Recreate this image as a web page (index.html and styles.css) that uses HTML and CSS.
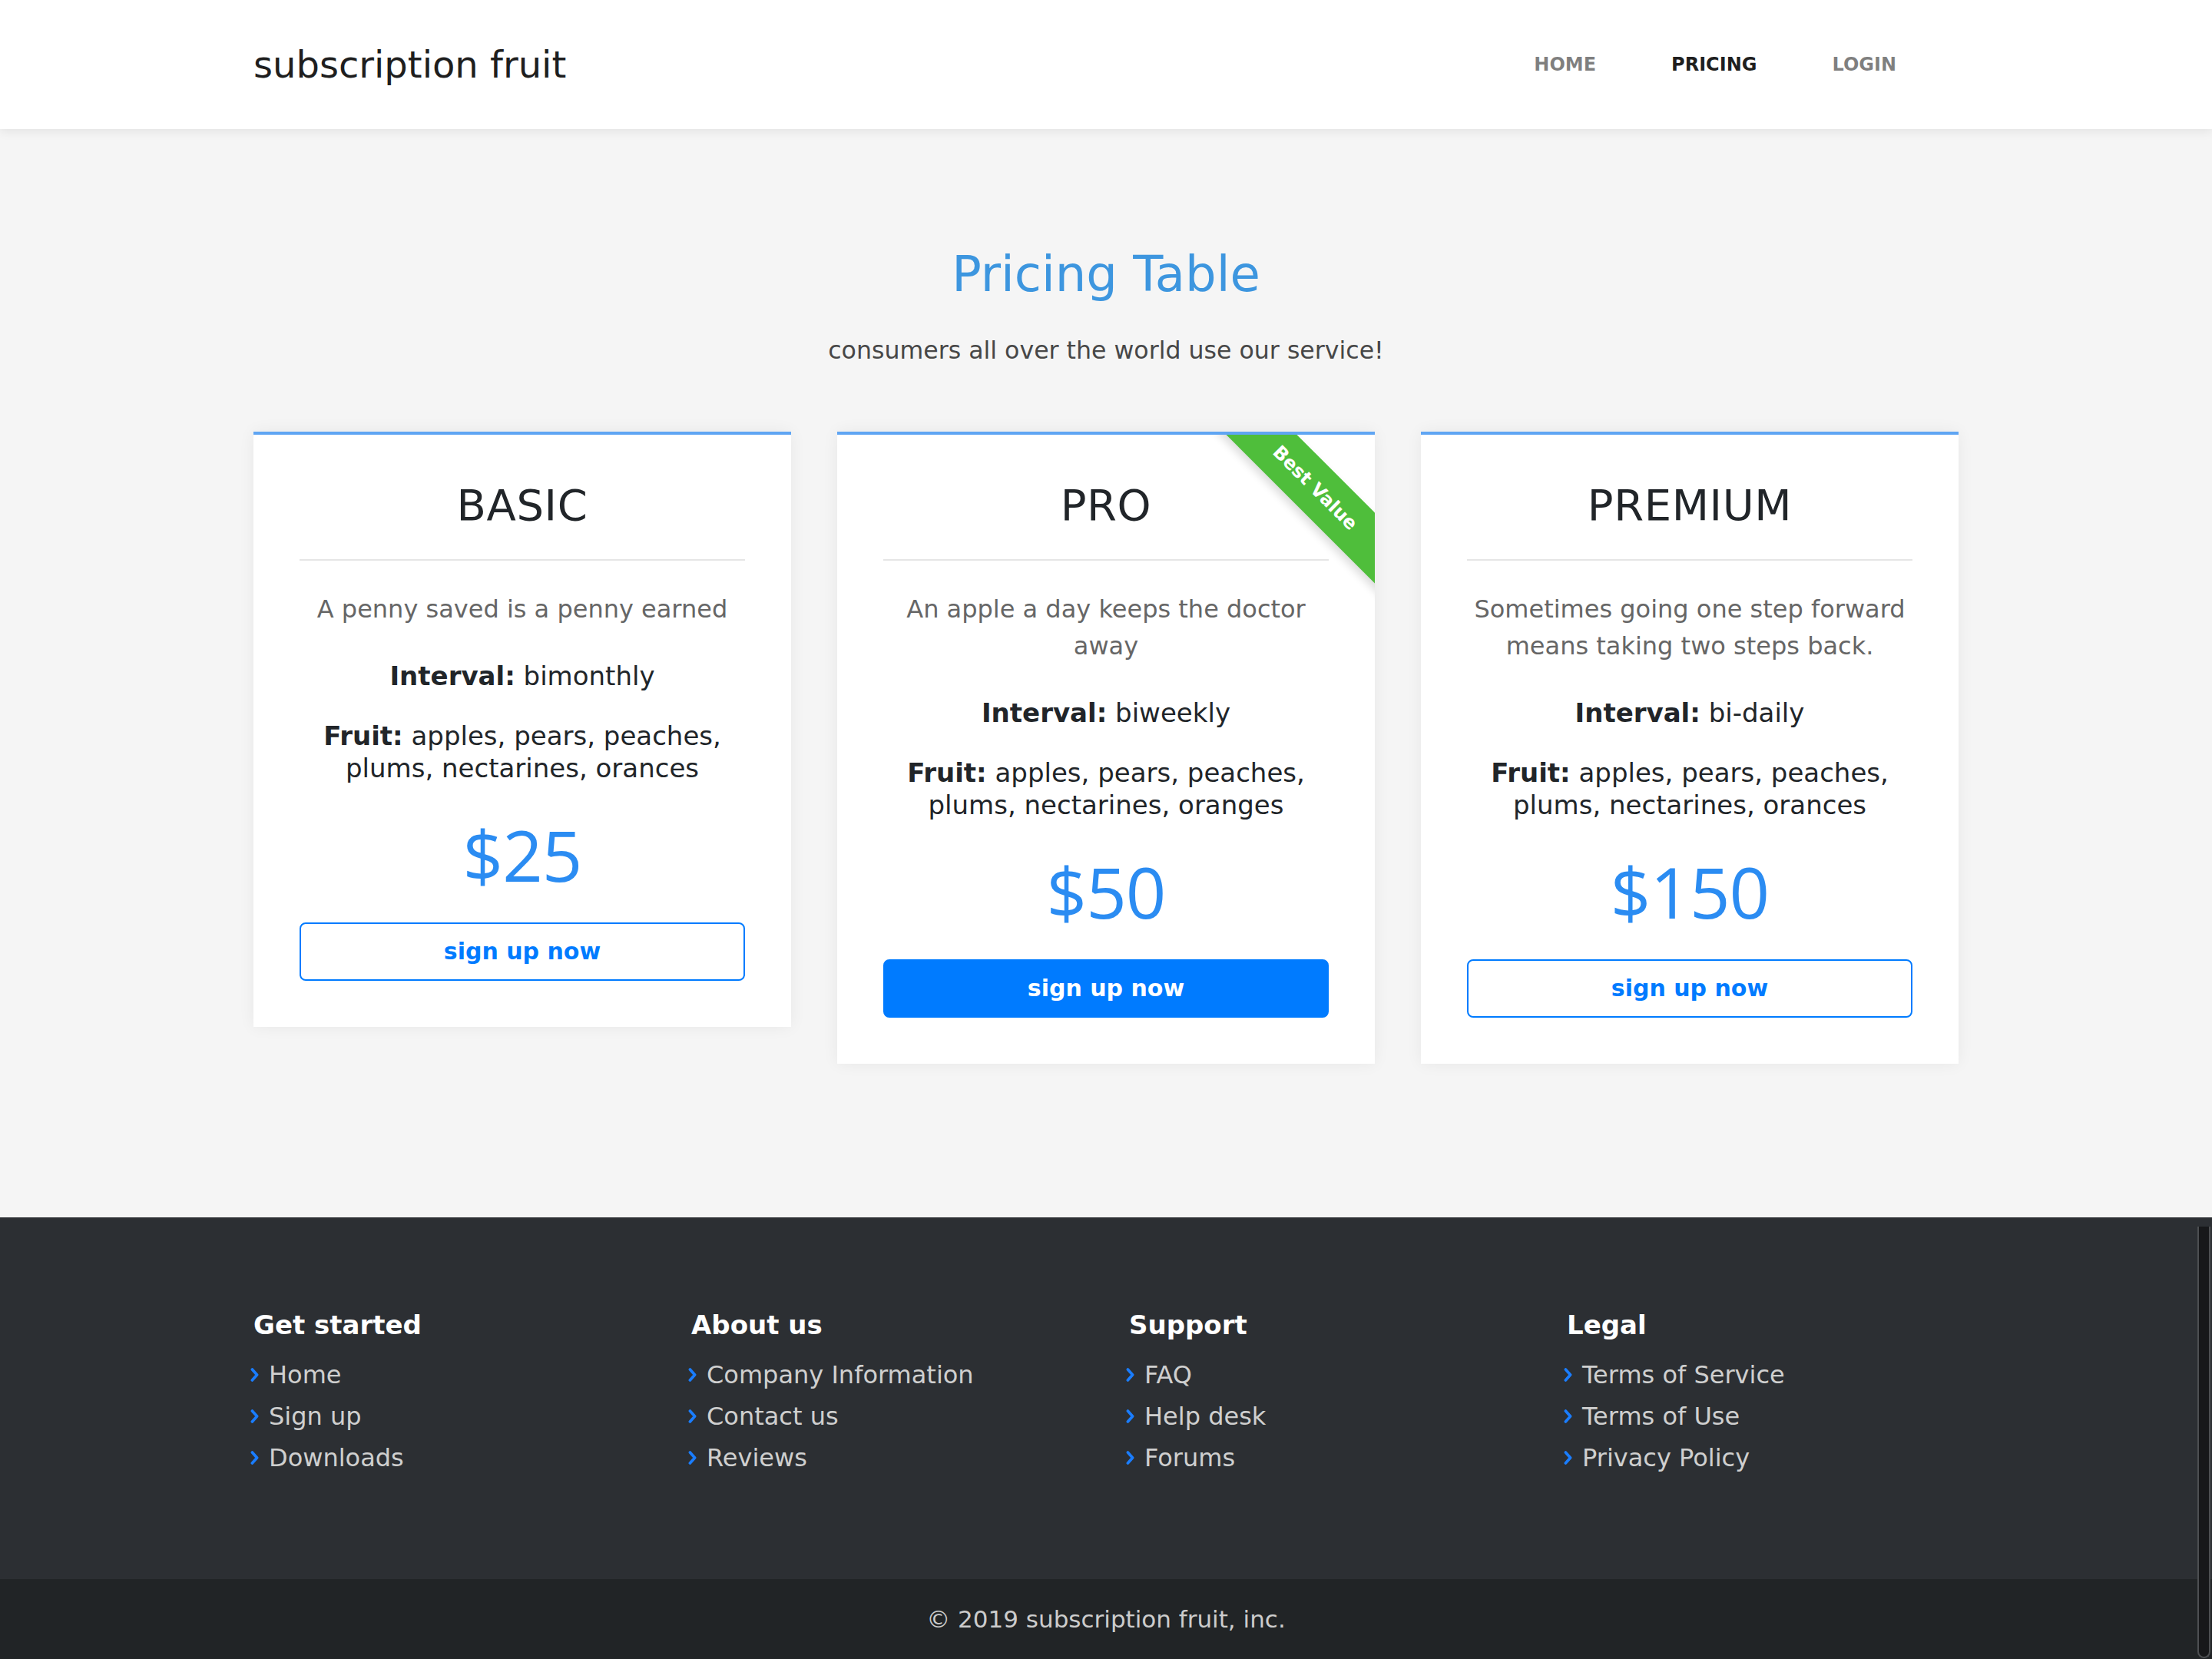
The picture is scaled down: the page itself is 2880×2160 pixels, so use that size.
FILE: index.html
```html
<!DOCTYPE html>
<html lang="en">
<head>
<meta charset="utf-8">
<title>subscription fruit - Pricing</title>
<link rel="stylesheet" href="styles.css">
</head>
<body>
<header class="site-header">
  <div class="header-inner">
    <a class="brand" href="#">subscription fruit</a>
    <nav class="main-nav">
      <a class="nav-link" href="#">HOME</a>
      <a class="nav-link active" href="#">PRICING</a>
      <a class="nav-link" href="#">LOGIN</a>
    </nav>
  </div>
</header>

<main class="pricing">
  <div class="intro">
    <h1 class="intro-title">Pricing Table</h1>
    <p class="intro-sub">consumers all over the world use our service!</p>
  </div>

  <div class="plans">
    <div class="plan">
      <h3 class="plan-name">BASIC</h3>
      <hr class="plan-rule">
      <p class="plan-desc">A penny saved is a penny earned</p>
      <p class="plan-interval"><b>Interval:</b> bimonthly</p>
      <p class="plan-fruit"><b>Fruit:</b> apples, pears, peaches,<br>plums, nectarines, orances</p>
      <div class="plan-price">$25</div>
      <a class="btn btn-outline" href="#">sign up now</a>
    </div>

    <div class="plan">
      <div class="ribbon">Best Value</div>
      <h3 class="plan-name">PRO</h3>
      <hr class="plan-rule">
      <p class="plan-desc">An apple a day keeps the doctor away</p>
      <p class="plan-interval"><b>Interval:</b> biweekly</p>
      <p class="plan-fruit"><b>Fruit:</b> apples, pears, peaches,<br>plums, nectarines, oranges</p>
      <div class="plan-price">$50</div>
      <a class="btn btn-solid" href="#">sign up now</a>
    </div>

    <div class="plan">
      <h3 class="plan-name">PREMIUM</h3>
      <hr class="plan-rule">
      <p class="plan-desc">Sometimes going one step forward means taking two steps back.</p>
      <p class="plan-interval"><b>Interval:</b> bi-daily</p>
      <p class="plan-fruit"><b>Fruit:</b> apples, pears, peaches,<br>plums, nectarines, orances</p>
      <div class="plan-price">$150</div>
      <a class="btn btn-outline" href="#">sign up now</a>
    </div>
  </div>
</main>

<footer class="site-footer">
  <div class="footer-main">
    <div class="footer-cols">
      <div class="footer-col">
        <h5 class="footer-head">Get started</h5>
        <ul class="footer-list">
          <li><svg class="chev" viewBox="0 0 6 10"><path d="M1.3 1.2 L4.7 5 L1.3 8.8"/></svg><a href="#">Home</a></li>
          <li><svg class="chev" viewBox="0 0 6 10"><path d="M1.3 1.2 L4.7 5 L1.3 8.8"/></svg><a href="#">Sign up</a></li>
          <li><svg class="chev" viewBox="0 0 6 10"><path d="M1.3 1.2 L4.7 5 L1.3 8.8"/></svg><a href="#">Downloads</a></li>
        </ul>
      </div>
      <div class="footer-col">
        <h5 class="footer-head">About us</h5>
        <ul class="footer-list">
          <li><svg class="chev" viewBox="0 0 6 10"><path d="M1.3 1.2 L4.7 5 L1.3 8.8"/></svg><a href="#">Company Information</a></li>
          <li><svg class="chev" viewBox="0 0 6 10"><path d="M1.3 1.2 L4.7 5 L1.3 8.8"/></svg><a href="#">Contact us</a></li>
          <li><svg class="chev" viewBox="0 0 6 10"><path d="M1.3 1.2 L4.7 5 L1.3 8.8"/></svg><a href="#">Reviews</a></li>
        </ul>
      </div>
      <div class="footer-col">
        <h5 class="footer-head">Support</h5>
        <ul class="footer-list">
          <li><svg class="chev" viewBox="0 0 6 10"><path d="M1.3 1.2 L4.7 5 L1.3 8.8"/></svg><a href="#">FAQ</a></li>
          <li><svg class="chev" viewBox="0 0 6 10"><path d="M1.3 1.2 L4.7 5 L1.3 8.8"/></svg><a href="#">Help desk</a></li>
          <li><svg class="chev" viewBox="0 0 6 10"><path d="M1.3 1.2 L4.7 5 L1.3 8.8"/></svg><a href="#">Forums</a></li>
        </ul>
      </div>
      <div class="footer-col">
        <h5 class="footer-head">Legal</h5>
        <ul class="footer-list">
          <li><svg class="chev" viewBox="0 0 6 10"><path d="M1.3 1.2 L4.7 5 L1.3 8.8"/></svg><a href="#">Terms of Service</a></li>
          <li><svg class="chev" viewBox="0 0 6 10"><path d="M1.3 1.2 L4.7 5 L1.3 8.8"/></svg><a href="#">Terms of Use</a></li>
          <li><svg class="chev" viewBox="0 0 6 10"><path d="M1.3 1.2 L4.7 5 L1.3 8.8"/></svg><a href="#">Privacy Policy</a></li>
        </ul>
      </div>
    </div>
  </div>
  <div class="footer-bottom">© 2019 subscription fruit, inc.</div>
  <div class="scroll-thumb"></div>
</footer>
</body>
</html>
```

FILE: styles.css
```css
html {
  zoom: 2;
}

body {
  margin: 0;
  background: #f5f5f5;
  font-family: "DejaVu Sans", "Noto Sans", sans-serif;
  color: #212529;
  font-size: 16px;
}

a {
  text-decoration: none;
}

/* ---------- header ---------- */
.site-header {
  position: relative;
  z-index: 2;
  height: 84px;
  background: #ffffff;
  box-shadow: 0 2px 6px rgba(0, 0, 0, 0.07);
}

.header-inner {
  width: 1110px;
  height: 84px;
  margin: 0 auto;
  display: flex;
  align-items: center;
  justify-content: space-between;
}

.brand {
  font-size: 24px;
  line-height: 84px;
  color: #1e1e1e;
  font-weight: 400;
}

.main-nav {
  display: flex;
  align-items: center;
  padding-right: 16px;
}

.nav-link {
  padding: 0 24.5px;
  font-size: 12px;
  font-weight: 700;
  line-height: 84px;
  color: rgba(0, 0, 0, 0.5);
}

.nav-link.active {
  color: rgba(0, 0, 0, 0.9);
}

/* ---------- pricing ---------- */
.pricing {
  padding-top: 75.5px;
}

.intro {
  text-align: center;
}

.intro-title {
  margin: 0;
  font-size: 32px;
  line-height: 38.4px;
  font-weight: 400;
  color: #3d96df;
}

.intro-sub {
  margin: 18px 0 0;
  font-size: 15.8px;
  line-height: 24px;
  color: #474747;
}

.plans {
  width: 1110px;
  margin: 41px auto 100px;
  display: flex;
  align-items: flex-start;
  gap: 30px;
}

.plan {
  position: relative;
  overflow: hidden;
  box-sizing: border-box;
  width: 350px;
  padding: 30px;
  background: #ffffff;
  border-top: 2px solid #5fa5f3;
  box-shadow: 0 0 10px rgba(0, 0, 0, 0.06);
  text-align: center;
}

.plan-name {
  margin: 0;
  font-size: 28px;
  line-height: 32px;
  font-weight: 400;
  letter-spacing: 0.3px;
  color: #212529;
}

.plan-rule {
  margin: 19px 0 0;
  border: 0;
  border-top: 1px solid #e6e6e6;
  height: 0;
}

.plan-desc {
  margin: 19.5px 0 0;
  font-size: 16px;
  line-height: 24px;
  color: #666666;
}

.plan-interval {
  margin: 21px 0 0;
  font-size: 17px;
  line-height: 21px;
  color: #212529;
}

.plan-fruit {
  margin: 18px 0 0;
  font-size: 17px;
  line-height: 21px;
  color: #212529;
}

.plan-interval b,
.plan-fruit b {
  font-weight: 700;
}

.plan-price {
  margin-top: 18px;
  font-family: "Open Sans", "DejaVu Sans", sans-serif;
  font-size: 46px;
  line-height: 56px;
  font-weight: 400;
  letter-spacing: -0.5px;
  color: #2b8cf2;
}

.btn {
  display: block;
  box-sizing: border-box;
  margin-top: 16px;
  height: 38px;
  border: 1px solid #007bff;
  border-radius: 4px;
  font-size: 15px;
  font-weight: 700;
  line-height: 36px;
  text-align: center;
}

.btn-outline {
  background: #ffffff;
  color: #007bff;
}

.btn-solid {
  background: #007bff;
  color: #ffffff;
}

.ribbon {
  position: absolute;
  left: 211.2px;
  top: 18.75px;
  width: 200px;
  height: 32.5px;
  line-height: 32.5px;
  transform: rotate(45deg);
  background: #4fbe3b;
  color: #ffffff;
  font-size: 12px;
  font-weight: 700;
  text-align: center;
  box-shadow: 0 3px 6px rgba(0, 0, 0, 0.14);
}

/* ---------- footer ---------- */
.site-footer {
  position: relative;
}

.footer-main {
  background: #2c2f33;
  padding: 60px 0 65.7px;
}

.footer-cols {
  width: 1140px;
  margin: 0 auto;
  display: grid;
  grid-template-columns: repeat(4, 1fr);
}

.footer-col {
  padding: 0 15px;
}

.footer-head {
  margin: 0;
  font-size: 17px;
  line-height: 20px;
  font-weight: 700;
  color: #ffffff;
}

.footer-list {
  list-style: none;
  margin: 9px 0 0;
  padding: 0;
}

.footer-list li {
  display: flex;
  align-items: center;
  height: 27px;
}

.footer-list a {
  font-size: 16px;
  line-height: 27px;
  color: #cfcfcf;
}

.chev {
  width: 5.5px;
  height: 10px;
  margin-left: -2px;
  margin-right: 6.5px;
  flex: none;
}

.chev path {
  fill: none;
  stroke: #1a7dff;
  stroke-width: 2;
  stroke-linecap: round;
  stroke-linejoin: round;
}

.footer-bottom {
  background: #212426;
  height: 52px;
  line-height: 52px;
  text-align: center;
  font-size: 15.5px;
  color: #cccccc;
}

.scroll-thumb {
  position: absolute;
  top: 6px;
  bottom: 0.5px;
  right: 1.2px;
  width: 6.5px;
  border: 1px solid #4d4f52;
  border-top: 0;
  border-radius: 0 0 5px 5px;
  background: #17181a;
}
```
